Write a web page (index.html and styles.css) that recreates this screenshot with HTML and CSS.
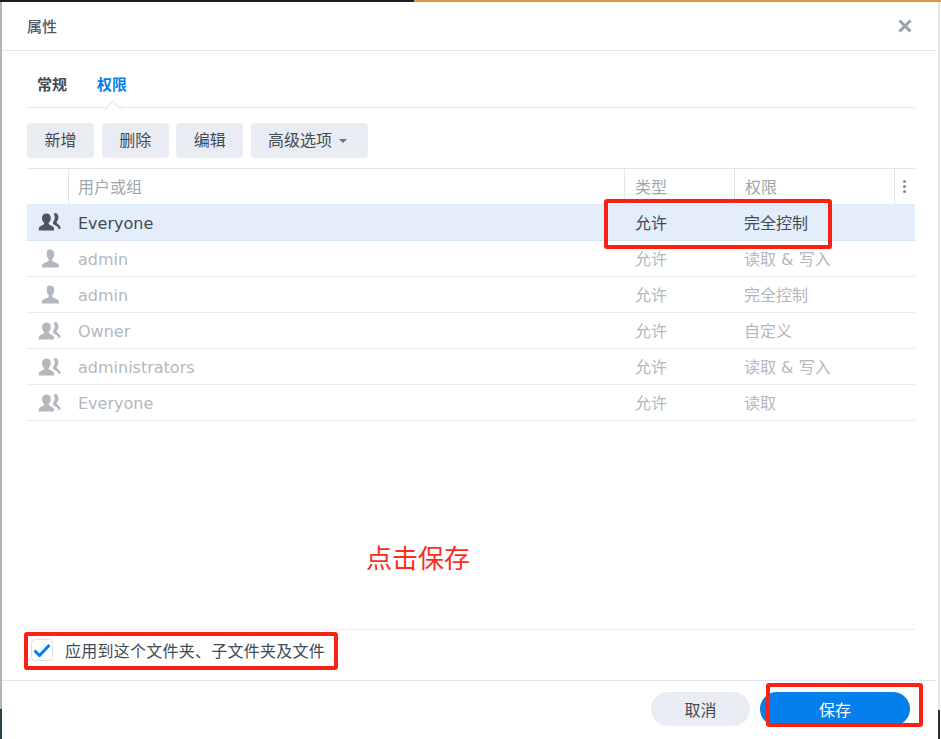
FILE: index.html
```html
<!DOCTYPE html>
<html lang="zh">
<head>
<meta charset="utf-8">
<title>属性</title>
<link rel="stylesheet" href="styles.css">
</head>
<body>
<svg class="defs" width="0" height="0" aria-hidden="true">
  <symbol id="user" viewBox="0 0 22 20">
    <path d="M11 .5c2.900 0 4.300 2 4.300 4.600 0 2.100-.8 3.800-1.900 5-.5.600-.4 1.700.3 2.100l4.700 2.200c1 .5 1.500 1.300 1.500 2.400v1.700H3v-1.700c0-1.100.5-1.900 1.500-2.400l4.700-2.200c.7-.4.8-1.500.3-2.100-1.100-1.200-1.800-2.900-1.800-5C7.700 2.500 8.100.5 11 .5z"/>
  </symbol>
  <symbol id="group" viewBox="0 0 24 20">
    <path d="M8.500 1.500c2.900 0 4.300 1.900 4.300 4.400 0 2-.8 3.700-1.900 4.800-.5.600-.4 1.500.3 1.900l3.600 1.800c.8.400 1.200 1.100 1.200 2v2.100H.8v-2.100c0-.9.4-1.600 1.200-2l3.600-1.800c.7-.4.800-1.300.3-1.900-1.100-1.100-1.900-2.800-1.900-4.800 0-2.500 1.600-4.400 4.500-4.400z"/>
    <path d="M16.800 1c2.400 0 3.700 1.800 3.700 4.100 0 1.800-.7 3.400-1.600 4.400-.5.500-.4 1.300.2 1.700l2.300 2.300c.6.600 1 1.400 1.400 2.900l-2.200.6c-.6-1.600-1-2.200-1.700-2.700l-3.200-1.900c-1-.8-1-2-.3-3 .9-1.100 1.400-2.400 1.400-3.900 0-1.600-.4-2.800-1.200-3.600.7-.6 1.400-.9 2.200-.9z"/>
  </symbol>
</svg>
<div class="dialog">
  <header class="title-bar">
    <h1 class="title">属性</h1>
    <svg class="close" width="14" height="14" viewBox="0 0 14 14"><path d="M1.500 1.500l11 11M12.500 1.500l-11 11"/></svg>
  </header>
  <main class="content">
    <nav class="tabs">
      <span class="tab">常规</span>
      <span class="tab tab-active">权限</span>
    </nav>
    <div class="toolbar">
      <button class="tool-btn">新增</button>
      <button class="tool-btn">删除</button>
      <button class="tool-btn">编辑</button>
      <button class="tool-btn tool-btn-menu">高级选项<span class="caret"></span></button>
    </div>
    <div class="table">
      <div class="row head">
        <div class="cell c-icon"></div>
        <div class="cell c-name">用户或组</div>
        <div class="cell c-type">类型</div>
        <div class="cell c-perm">权限</div>
        <div class="cell c-more"><span class="dots"><i></i><i></i><i></i></span></div>
      </div>
      <div class="row selected">
        <div class="cell c-icon"><svg class="ico-group"><use href="#group"/></svg></div>
        <div class="cell c-name">Everyone</div>
        <div class="cell c-type">允许</div>
        <div class="cell c-perm">完全控制</div>
      </div>
      <div class="row inherited">
        <div class="cell c-icon"><svg class="ico-user"><use href="#user"/></svg></div>
        <div class="cell c-name">admin</div>
        <div class="cell c-type">允许</div>
        <div class="cell c-perm">读取 &amp; 写入</div>
      </div>
      <div class="row inherited">
        <div class="cell c-icon"><svg class="ico-user"><use href="#user"/></svg></div>
        <div class="cell c-name">admin</div>
        <div class="cell c-type">允许</div>
        <div class="cell c-perm">完全控制</div>
      </div>
      <div class="row inherited">
        <div class="cell c-icon"><svg class="ico-group"><use href="#group"/></svg></div>
        <div class="cell c-name">Owner</div>
        <div class="cell c-type">允许</div>
        <div class="cell c-perm">自定义</div>
      </div>
      <div class="row inherited">
        <div class="cell c-icon"><svg class="ico-group"><use href="#group"/></svg></div>
        <div class="cell c-name">administrators</div>
        <div class="cell c-type">允许</div>
        <div class="cell c-perm">读取 &amp; 写入</div>
      </div>
      <div class="row inherited">
        <div class="cell c-icon"><svg class="ico-group"><use href="#group"/></svg></div>
        <div class="cell c-name">Everyone</div>
        <div class="cell c-type">允许</div>
        <div class="cell c-perm">读取</div>
      </div>
    </div>
    <div class="hint-area"><span class="hint">点击保存</span></div>
    <label class="apply">
      <span class="checkbox"><svg width="18" height="14" viewBox="0 0 18 14"><path d="M1.500 7.500l5 5L16.500 2"/></svg></span>
      <span class="apply-text">应用到这个文件夹、子文件夹及文件</span>
    </label>
  </main>
  <footer class="footer">
    <button class="pill pill-cancel">取消</button>
    <button class="pill pill-save">保存</button>
  </footer>
</div>
<div class="mark mark-perm"></div>
<div class="mark mark-apply"></div>
<div class="mark mark-save"></div>
</body>
</html>
```
FILE: styles.css
```css
* { box-sizing: border-box; }
html, body { height: 100%; margin: 0; }
body {
  position: relative;
  overflow: hidden;
  background:
    linear-gradient(90deg, #17202b 0 44%, #d99a45 44% 100%) top / 100% 2px no-repeat,
    linear-gradient(#b3b3b3 0 709px, #24414a 709px) left / 2px 100% no-repeat,
    linear-gradient(#e4e5e6 0 710px, #2b2f36 710px) right 1px top / 2px 100% no-repeat,
    #fff;
  font-family: "DejaVu Sans", "Noto Sans CJK SC", sans-serif;
  color: #414b55;
  padding: 2px 5px 0 2px;
}
.defs { position: absolute; }
.dialog {
  height: 737px;
  background: #fff;
  display: flex;
  flex-direction: column;
  border-radius: 3px 3px 0 0;
}
.title-bar {
  height: 49px;
  flex: none;
  display: flex;
  align-items: center;
  justify-content: space-between;
  padding: 0 24px 0 25px;
  border-bottom: 1px solid #dfe6ed;
}
.title { margin: 0 0 2px; font-size: 15px; font-weight: 500; color: #4f5963; }
.close { fill: none; stroke: #9aa1a8; stroke-width: 3; }
.content {
  flex: 1;
  display: flex;
  flex-direction: column;
  padding: 0 21px 0 25px;
  min-height: 0;
}
.tabs {
  display: flex;
  gap: 30px;
  height: 57px;
  padding: 24px 0 0 10px;
  border-bottom: 1px solid #dfe6ed;
}
.tab { font-size: 15px; font-weight: 700; line-height: 20px; color: #414b55; }
.tab-active { color: #057feb; position: relative; }
.tab-active::after {
  content: "";
  position: absolute;
  left: 10px;
  top: 28px;
  width: 11px;
  height: 11px;
  background: #fff;
  border-left: 1px solid #dfe6ed;
  border-top: 1px solid #dfe6ed;
  transform: rotate(45deg);
}
.toolbar { display: flex; gap: 7.67px; padding-top: 15px; height: 60px; }
.tool-btn {
  height: 35px;
  width: 67px;
  border: 0;
  border-radius: 4px;
  background: #e9edf3;
  color: #414b55;
  font: 400 16px/34px "DejaVu Sans", "Noto Sans CJK SC", sans-serif;
  padding: 1px 0 0;
}
.tool-btn-menu { width: 117px; }
.caret {
  display: inline-block;
  margin: 0 4px 0 7px;
  vertical-align: 3px;
  border: 4.500px solid transparent;
  border-top-color: #6b747d;
  border-bottom: 0;
}
.table { border-top: 1px solid #dfe6ed; flex: none; }
.row { display: flex; height: 36px; border-bottom: 1px solid #e6ecf3; font-size: 16px; }
.row.head { height: 35px; border-bottom: 0; color: #a0a6ad; }
.cell { display: flex; align-items: center; padding-left: 10px; }
.c-icon { width: 41px; padding: 0 0 0 4px; justify-content: center; }
.c-name { flex: 1; padding-top: 2px; }
.head .c-name { padding: 0 0 2px 9px; }
.c-type { width: 110px; }
.row:not(.head) .c-type { padding-left: 11px; }
.c-perm { width: 160px; }
.head .c-type, .head .c-perm, .inherited .c-type, .inherited .c-perm { padding-bottom: 2px; }
.row > .c-perm:last-child { width: 181px; }
.c-more { width: 21px; padding: 0; justify-content: center; }
.head .c-name, .head .c-type, .head .c-perm, .head .c-more { border-left: 1px solid #dfe6ed; }
.dots { display: flex; flex-direction: column; gap: 2px; margin-left: -1px; }
.dots i { width: 3px; height: 3px; border-radius: 50%; background: #848c94; }
.row.selected { height: 37px; background: #e3eefa; color: #414b55; border-bottom-color: #d5e3f2; }
.inherited { color: #b3b8be; }
.ico-group, .ico-user { width: 24px; height: 20px; fill: currentColor; }
.selected .ico-group { color: #4c5662; }
.hint-area { flex: 1; position: relative; min-height: 0; }
.hint { position: absolute; left: 339px; top: 121px; font-size: 26px; line-height: 34px; color: #fa2e1e; }
.apply {
  display: flex;
  align-items: center;
  gap: 12px;
  height: 51px;
  flex: none;
  border-top: 1px solid #e6ecf3;
  padding: 0 0 10px 4px;
  font-size: 16px;
  color: #414b55;
}
.apply-text { letter-spacing: .25px; }
.checkbox {
  width: 22px;
  height: 22px;
  display: flex;
  align-items: center;
  justify-content: center;
  border: 1px solid #d8e2ec;
  border-radius: 4px;
  background: #fff;
}
.checkbox path { fill: none; stroke: #057feb; stroke-width: 3; }
.footer {
  height: 59px;
  flex: none;
  display: flex;
  justify-content: flex-end;
  gap: 10px;
  padding: 11px 26px 0 0;
  border-top: 1px solid #dfe6ed;
}
.pill {
  width: 99px;
  height: 34px;
  border: 0;
  border-radius: 17px;
  font: 400 16px "DejaVu Sans", "Noto Sans CJK SC", sans-serif;
  padding: 0;
}
.pill-cancel { background: #e9edf3; color: #414b55; }
.pill-save { width: 150px; background: #057feb; color: #fff; }
.mark {
  position: absolute;
  border: 4px solid #fa2014;
  border-radius: 3px;
}
.mark-perm { left: 604px; top: 199px; width: 228px; height: 50px; }
.mark-apply { left: 24px; top: 632px; width: 314px; height: 38px; }
.mark-save { left: 766px; top: 683px; width: 157px; height: 44px; }
```
